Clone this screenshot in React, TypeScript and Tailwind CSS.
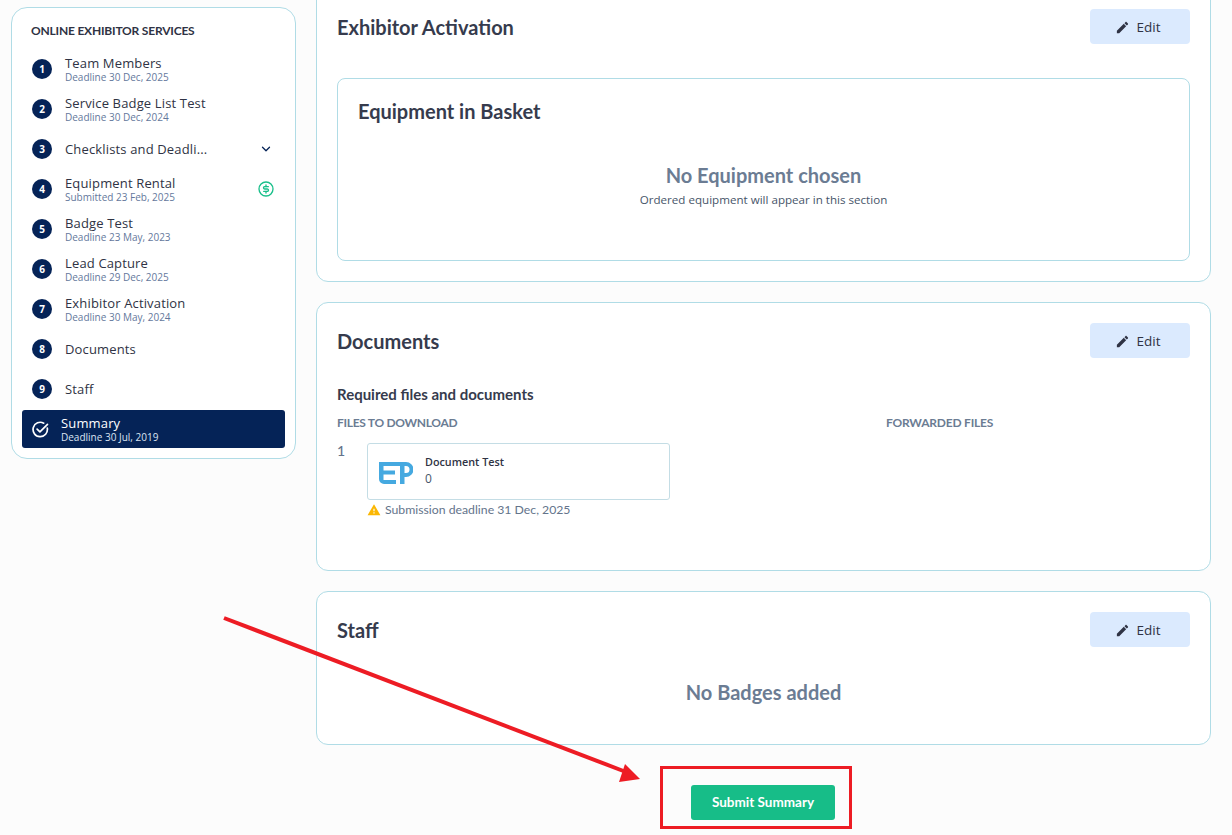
import { ChevronDown } from "lucide-react";

const STEPS = [
  { n: 1, title: "Team Members", sub: "Deadline 30 Dec, 2025" },
  { n: 2, title: "Service Badge List Test", sub: "Deadline 30 Dec, 2024" },
  { n: 3, title: "Checklists and Deadli...", sub: null, chevron: true },
  { n: 4, title: "Equipment Rental", sub: "Submitted 23 Feb, 2025", paid: true },
  { n: 5, title: "Badge Test", sub: "Deadline 23 May, 2023" },
  { n: 6, title: "Lead Capture", sub: "Deadline 29 Dec, 2025" },
  { n: 7, title: "Exhibitor Activation", sub: "Deadline 30 May, 2024" },
  { n: 8, title: "Documents", sub: null },
  { n: 9, title: "Staff", sub: null },
];

function EditButton() {
  return (
    <button className="flex h-[35px] w-[100px] items-center justify-center gap-[7px] rounded-[4px] bg-[#dbeafe] pt-[1px] pr-[5px] font-['Open_Sans',sans-serif] text-[13.5px] font-medium text-[#2f3344]">
      <svg viewBox="0 0 24 24" className="h-[15px] w-[15px] fill-[#2f3344]">
        <path d="M3 17.25V21h3.75L17.81 9.94l-3.75-3.75L3 17.25zM20.71 7.04c.39-.39.39-1.02 0-1.41l-2.34-2.34c-.39-.39-1.02-.39-1.41 0l-1.83 1.83 3.75 3.75 1.83-1.83z" />
      </svg>
      Edit
    </button>
  );
}

function CardHeader({ title }: { title: string }) {
  return (
    <div className="flex h-[35px] items-center justify-between">
      <h2 className="text-[20px] font-bold text-[#363b4d]">{title}</h2>
      <EditButton />
    </div>
  );
}

function Sidebar() {
  return (
    <aside className="mt-[7px] h-[452px] w-[285px] shrink-0 rounded-[16px] border border-[#b0dce6] bg-white px-[10px] pt-[15px]">
      <h3 className="ml-[9px] h-[16px] text-[12px] leading-[16px] font-bold tracking-[-0.2px] text-[#2f3344]">
        ONLINE EXHIBITOR SERVICES
      </h3>
      <ul className="mt-[10px] font-['Open_Sans',sans-serif]">
        {STEPS.map((s) => (
          <li key={s.n} className="flex h-[40px] items-center pl-[10px] pr-[12px]">
            <span className="flex h-[20px] w-[20px] shrink-0 items-center justify-center rounded-full bg-[#052357] text-[10px] font-bold text-white">
              {s.n}
            </span>
            <div className={s.sub ? "ml-[13px] flex-1 pt-[2px]" : "ml-[13px] flex-1"}>
              <div className="text-[13px] leading-[14px] tracking-[0.15px] text-[#2f3344]">{s.title}</div>
              {s.sub && <div className="text-[10px] leading-[14px] text-[#64789c]">{s.sub}</div>}
            </div>
            {s.chevron && <ChevronDown className="h-[14px] w-[14px] text-[#052357]" strokeWidth={2.2} />}
            {s.paid && (
              <svg viewBox="0 0 24 24" className="-mr-[1px] h-[16px] w-[16px] fill-none stroke-[#19bf8a]" strokeWidth="2" strokeLinecap="round" strokeLinejoin="round">
                <circle cx="12" cy="12" r="10.5" />
                <path d="M15.500 8.500h-5a1.800 1.800 0 1 0 0 3.500h3a1.800 1.800 0 1 1 0 3.500h-5" />
                <path d="M12 6v2.500M12 15.500V18" />
              </svg>
            )}
          </li>
        ))}
      </ul>
      <div className="mt-[1px] flex h-[38px] items-center rounded-[3px] bg-[#052357] pl-[10px] font-['Open_Sans',sans-serif] text-white">
        <svg viewBox="0 0 18 18" className="h-[17px] w-[17px] fill-none stroke-white" strokeWidth="1.8" strokeLinecap="round" strokeLinejoin="round">
          <path d="M16.200 7.600A7.600 7.600 0 1 1 12.400 2.300" />
          <path d="M5.400 8.600l3 3 8-8" />
        </svg>
        <div className="ml-[12px] pt-[2px]">
          <div className="text-[13px] leading-[14px] tracking-[0.15px]">Summary</div>
          <div className="text-[10px] leading-[14px] text-[#dbe4f2]">Deadline 30 Jul, 2019</div>
        </div>
      </div>
    </aside>
  );
}

function FileCard() {
  return (
    <div>
      <div className="flex h-[57px] w-[303px] items-center rounded-[3px] border border-[#c4dde5] bg-white pl-[11px]">
        <svg viewBox="0 0 34 22" className="mt-[2px] h-[22px] w-[34px]">
          <path d="M0 0H18V4H4.500V8.500H16V12.500H4.500V18H17V22H5a5 5 0 0 1-5-5z" fill="#45a9e0" />
          <path
            fillRule="evenodd"
            d="M18 0H27a7.500 7.500 0 0 1 0 15H25.500V22H21V4H18zM25.500 4V11H27a3.500 3.500 0 0 0 0-7z"
            fill="#45a9e0"
          />
        </svg>
        <div className="mb-[2px] ml-[12px] font-['Open_Sans',sans-serif]">
          <div className="text-[10.8px] leading-[16px] font-semibold text-[#2f3344]">Document Test</div>
          <div className="text-[12px] leading-[18px] text-[#475569]">0</div>
        </div>
      </div>
      <div className="mt-[2px] flex h-[16px] items-center gap-[4px]">
        <svg viewBox="0 0 24 24" className="h-[14px] w-[14px] fill-[#fbb703]">
          <path d="M1 21h22L12 2 1 21zm12-3h-2v-2h2v2zm0-4h-2v-4h2v4z" />
        </svg>
        <span className="text-[12.25px] text-[#64748b]">Submission deadline 31 Dec, 2025</span>
      </div>
    </div>
  );
}

export default function App() {
  return (
    <div className="relative h-[835px] overflow-hidden bg-[#fcfcfc] font-['Lato',sans-serif]">
      <div className="flex pl-[11px]">
        <Sidebar />
        <main className="-mt-[12px] ml-[20px] w-[895px]">
          <section className="h-[294px] rounded-[12px] border border-[#b0dce6] bg-white px-[20px] pt-[20px]">
            <CardHeader title="Exhibitor Activation" />
            <div className="mt-[34px] h-[183px] rounded-[8px] border border-[#b0dce6] bg-white px-[20px] pt-[16px]">
              <h2 className="text-[20px] leading-[32px] font-bold text-[#363b4d]">Equipment in Basket</h2>
              <div className="mt-[34px] text-center">
                <div className="text-[20px] leading-[28px] font-bold text-[#6b7c93]">No Equipment chosen</div>
                <div className="mt-[3px] font-['Open_Sans',sans-serif] text-[11.6px] leading-[16px] text-[#475569]">
                  Ordered equipment will appear in this section
                </div>
              </div>
            </div>
          </section>

          <section className="mt-[20px] h-[269px] rounded-[12px] border border-[#b0dce6] bg-white px-[20px] pt-[20px]">
            <CardHeader title="Documents" />
            <div className="mt-[26px] text-[15px] leading-[20px] font-bold text-[#363b4d]">Required files and documents</div>
            <div className="mt-[11px] grid grid-cols-[549px_1fr] text-[12px] leading-[16px] font-bold text-[#6b7c93]">
              <span className="tracking-[-0.3px]">FILES TO DOWNLOAD</span>
              <span className="tracking-[-0.2px]">FORWARDED FILES</span>
            </div>
            <div className="mt-[12px] flex">
              <span className="w-[30px] text-[14px] leading-[16px] font-medium text-[#64748b]">1</span>
              <FileCard />
            </div>
          </section>

          <section className="mt-[20px] h-[154px] rounded-[12px] border border-[#b0dce6] bg-white px-[20px] pt-[20px]">
            <CardHeader title="Staff" />
            <div className="mt-[31px] text-center text-[20px] leading-[28px] font-bold text-[#6b7c93]">No Badges added</div>
          </section>

          <div className="mt-[40px] flex justify-center pr-[1px]">
            <button className="h-[35px] w-[144px] rounded-[3px] bg-[#17bd88] text-[13.5px] font-bold text-white">Submit Summary</button>
          </div>
        </main>
      </div>

      {/* annotation drawn over the page */}
      <svg className="pointer-events-none absolute top-0 left-0 h-[835px] w-[1232px]" viewBox="0 0 1232 835">
        <line x1="224" y1="618" x2="626" y2="772" stroke="#ed1c24" strokeWidth="4" />
        <polygon points="640,779 625,764 619,782" fill="#ed1c24" />
      </svg>
      <div className="pointer-events-none absolute top-[766px] left-[660px] h-[63px] w-[192px] border-[3px] border-[#ed1c24]" />
    </div>
  );
}
